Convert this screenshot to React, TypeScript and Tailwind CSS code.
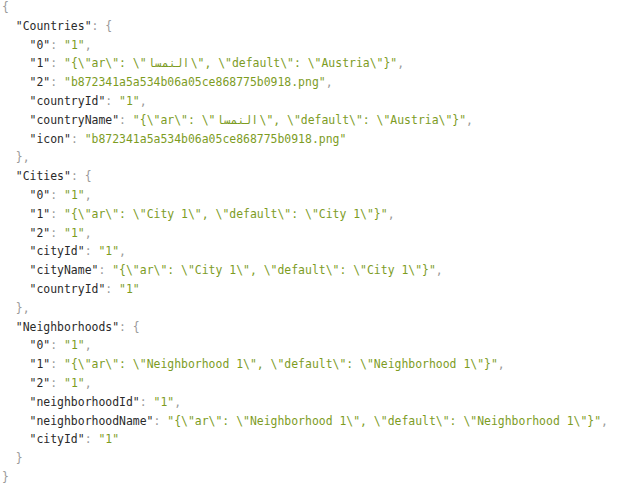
import React from 'react'

type Entry = { k: string; v: React.ReactNode; last?: boolean }

const AR = 'النمسا'

const Arabic = () => <span className="inline-block w-[44px] text-center">{AR}</span>

const groups: { name: string; last?: boolean; items: Entry[] }[] = [
    {
        name: 'Countries',
        items: [
            { k: '0', v: '"1"' },
            { k: '1', v: <>{'"{\\"ar\\": \\"'}<Arabic />{'\\", \\"default\\": \\"Austria\\"}"'}</> },
            { k: '2', v: '"b872341a5a534b06a05ce868775b0918.png"' },
            { k: 'countryId', v: '"1"' },
            { k: 'countryName', v: <>{'"{\\"ar\\": \\"'}<Arabic />{'\\", \\"default\\": \\"Austria\\"}"'}</> },
            { k: 'icon', v: '"b872341a5a534b06a05ce868775b0918.png"', last: true },
        ],
    },
    {
        name: 'Cities',
        items: [
            { k: '0', v: '"1"' },
            { k: '1', v: '"{\\"ar\\": \\"City 1\\", \\"default\\": \\"City 1\\"}"' },
            { k: '2', v: '"1"' },
            { k: 'cityId', v: '"1"' },
            { k: 'cityName', v: '"{\\"ar\\": \\"City 1\\", \\"default\\": \\"City 1\\"}"' },
            { k: 'countryId', v: '"1"', last: true },
        ],
    },
    {
        name: 'Neighborhoods',
        last: true,
        items: [
            { k: '0', v: '"1"' },
            { k: '1', v: '"{\\"ar\\": \\"Neighborhood 1\\", \\"default\\": \\"Neighborhood 1\\"}"' },
            { k: '2', v: '"1"' },
            { k: 'neighborhoodId', v: '"1"' },
            { k: 'neighborhoodName', v: '"{\\"ar\\": \\"Neighborhood 1\\", \\"default\\": \\"Neighborhood 1\\"}"' },
            { k: 'cityId', v: '"1"', last: true },
        ],
    },
]

const Punct = ({ children }: { children: React.ReactNode }) => (
    <span className="text-[#9a9a9a]">{children}</span>
)

const Line = ({ indent, children }: { indent: number; children: React.ReactNode }) => (
    <div className="whitespace-pre h-[18.8px]">
        {'  '.repeat(indent)}
        {children}
    </div>
)

export default function App() {
    return (
        <div className="w-[640px] h-[488px] overflow-hidden bg-white">
            <div
                className="-mt-[2px] pl-[2px] text-[11.45px] leading-[18.8px] text-[#2a2a2a]"
                style={{ fontFamily: '"DejaVu Sans Mono", "Liberation Mono", monospace' }}
            >
                <Line indent={0}><Punct>{'{'}</Punct></Line>
                {groups.map((g) => (
                    <React.Fragment key={g.name}>
                        <Line indent={1}>
                            {`"${g.name}"`}<Punct>{': {'}</Punct>
                        </Line>
                        {g.items.map((it) => (
                            <Line indent={2} key={it.k}>
                                {`"${it.k}"`}<Punct>{': '}</Punct>
                                <span className="text-[#7d9c1f]">{it.v}</span>
                                {!it.last && <Punct>,</Punct>}
                            </Line>
                        ))}
                        <Line indent={1}><Punct>{g.last ? '}' : '},'}</Punct></Line>
                    </React.Fragment>
                ))}
                <Line indent={0}><Punct>{'}'}</Punct></Line>
            </div>
        </div>
    )
}
